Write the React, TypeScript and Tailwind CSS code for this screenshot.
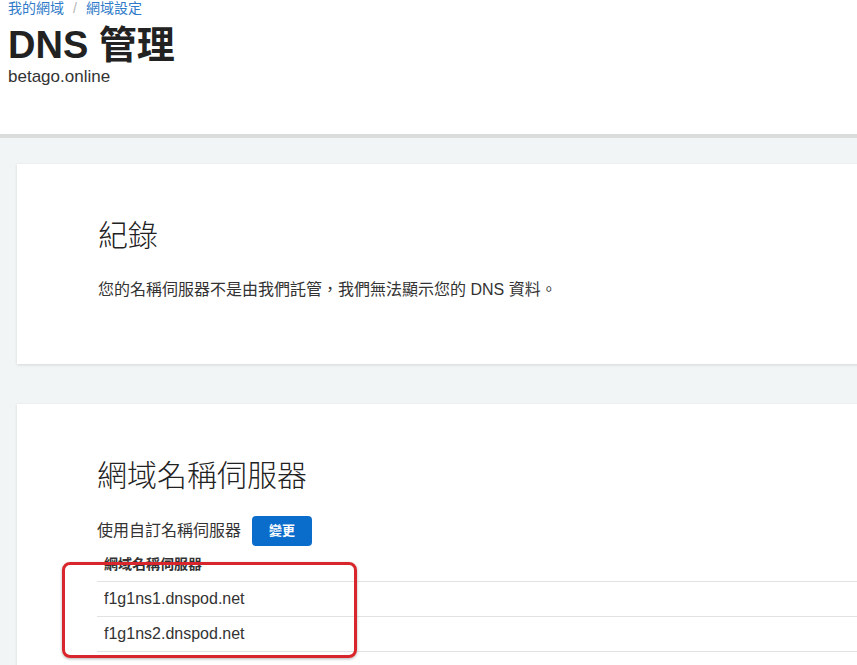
import React from "react";

const nameServers = ["f1g1ns1.dnspod.net", "f1g1ns2.dnspod.net"];

const font = {
  fontFamily:
    '"Liberation Sans", "Noto Sans CJK TC", "Noto Sans", sans-serif',
};

const App: React.FC = () => {
  return (
    <div
      className="min-h-screen w-full overflow-hidden bg-[#f2f5f6] text-[#333]"
      style={font}
    >
      {/* page header */}
      <header className="h-[138px] border-b-4 border-[#dadbdb] bg-white px-[8px]">
        <nav className="flex h-[16px] items-center gap-[9px] text-[14px] leading-[16px] text-[#2f7bc9]">
          <a href="#">我的網域</a>
          <span className="text-[#b5b5b5]">/</span>
          <a href="#">網域設定</a>
        </nav>
        <h1 className="mt-[7px] text-[38px] font-bold leading-[44px] text-[#222]">
          DNS 管理
        </h1>
        <p className="text-[17px] leading-[20px] text-[#333]">betago.online</p>
      </header>

      <main className="flex flex-col gap-[40px] pl-[17px] pt-[26px]">
        {/* records */}
        <section className="w-[880px] bg-white pb-[62px] pl-[81px] pt-[52px] shadow-[0_1px_3px_rgba(0,0,0,0.12)]">
          <h2 className="text-[30px] font-light leading-[40px] text-[#222]">
            紀錄
          </h2>
          <p className="mt-[22px] text-[16px] leading-[24px] text-[#333]">
            您的名稱伺服器不是由我們託管，我們無法顯示您的 DNS 資料。
          </p>
        </section>

        {/* name servers */}
        <section className="relative w-[880px] bg-white pb-[40px] pl-[80px] pt-[52px] shadow-[0_1px_3px_rgba(0,0,0,0.12)]">
          <h2 className="text-[30px] font-light leading-[40px] text-[#222]">
            網域名稱伺服器
          </h2>
          <div className="mt-[20px] flex h-[30px] items-center gap-[11px]">
            <span className="text-[16px] leading-[20px] text-[#333]">
              使用自訂名稱伺服器
            </span>
            <button className="h-[30px] w-[60px] rounded-[4px] bg-[#0b6dcb] text-[13px] font-bold text-white">
              變更
            </button>
          </div>

          <div className="mt-[8px]">
            <div className="border-b border-[#e2e2e2] pb-[7px] pl-[7px] text-[14px] font-bold leading-[20px] text-[#333]">
              網域名稱伺服器
            </div>
            {nameServers.map((ns) => (
              <div
                key={ns}
                className="flex h-[35px] items-center border-b border-[#e2e2e2] pl-[7px] text-[16px] text-[#333]"
              >
                {ns}
              </div>
            ))}
          </div>

          {/* red highlight annotation */}
          <div className="pointer-events-none absolute left-[45px] top-[158px] h-[96px] w-[295px] rounded-[8px] border-[3px] border-[#d9252c] shadow-[0_1px_3px_rgba(0,0,0,0.3)]" />
        </section>
      </main>
    </div>
  );
};

export default App;
